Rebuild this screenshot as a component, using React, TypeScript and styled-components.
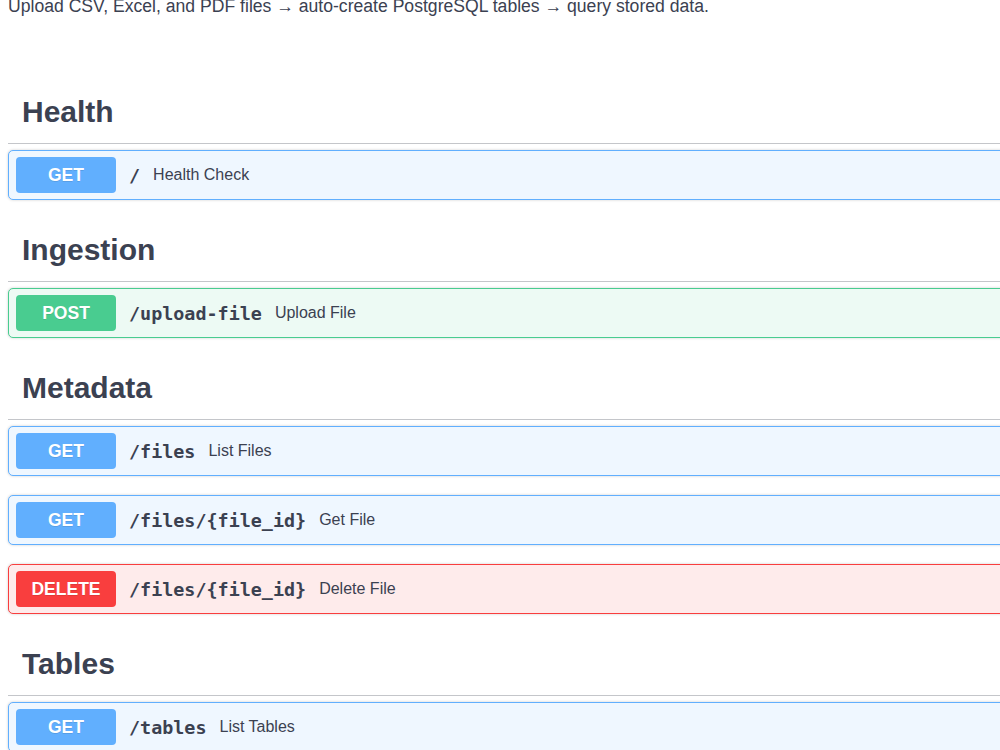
import React from "react";
import styled, { createGlobalStyle } from "styled-components";

type Method = "get" | "post" | "delete";

// endpoint groups, in the order the docs list them
const sections: {
  tag: string;
  ops: { method: Method; path: string; summary: string }[];
}[] = [
  { tag: "Health", ops: [{ method: "get", path: "/", summary: "Health Check" }] },
  {
    tag: "Ingestion",
    ops: [{ method: "post", path: "/upload-file", summary: "Upload File" }],
  },
  {
    tag: "Metadata",
    ops: [
      { method: "get", path: "/files", summary: "List Files" },
      { method: "get", path: "/files/{file_id}", summary: "Get File" },
      { method: "delete", path: "/files/{file_id}", summary: "Delete File" },
    ],
  },
  { tag: "Tables", ops: [{ method: "get", path: "/tables", summary: "List Tables" }] },
];

const palette: Record<Method, { main: string; bg: string }> = {
  get: { main: "#61affe", bg: "#eff7ff" },
  post: { main: "#49cc90", bg: "#edfaf4" },
  delete: { main: "#f93e3e", bg: "#feebeb" },
};

const GlobalStyle = createGlobalStyle`
  html, body {
    margin: 0;
    padding: 0;
    background: #ffffff;
    overflow: hidden;
  }
  body {
    font-family: "Liberation Sans", Arial, sans-serif;
    color: #3b4151;
  }
`;

export default function App() {
  return (
    <>
      <GlobalStyle />
      <Page>
        <Description>
          Upload CSV, Excel, and PDF files → auto-create PostgreSQL tables → query stored data.
        </Description>
        {sections.map((section) => (
          <Section key={section.tag}>
            <TagHeader>{section.tag}</TagHeader>
            <OpList>
              {section.ops.map((op, i) => (
                <OpBlock key={i} $method={op.method}>
                  <MethodBadge $method={op.method}>{op.method.toUpperCase()}</MethodBadge>
                  <OpPath>{op.path}</OpPath>
                  <OpSummary>{op.summary}</OpSummary>
                </OpBlock>
              ))}
            </OpList>
          </Section>
        ))}
      </Page>
    </>
  );
}

const Page = styled.div`
  width: 1200px;
  padding: 0 0 40px 8px;
  display: flex;
  flex-direction: column;
`;

const Description = styled.p`
  margin: -5px 0 64px;
  font-size: 17.6px;
  line-height: 22px;
  color: #3b4151;
`;

const Section = styled.section`
  display: flex;
  flex-direction: column;
`;

const TagHeader = styled.h3`
  margin: 0;
  height: 62px;
  display: flex;
  align-items: center;
  padding: 0 20px 0 14px;
  font-size: 30px;
  font-weight: 700;
  color: #3b4151;
  border-bottom: 1px solid rgba(59, 65, 81, 0.3);
`;

const OpList = styled.div`
  display: flex;
  flex-direction: column;
  gap: 19px;
  padding: 6px 0 19px;
`;

const OpBlock = styled.div<{ $method: Method }>`
  display: flex;
  align-items: center;
  height: 50px;
  box-sizing: border-box;
  padding: 0 7px;
  border: 1px solid ${(p) => palette[p.$method].main};
  background: ${(p) => palette[p.$method].bg};
  border-radius: 5px;
  box-shadow: 0 0 3px rgba(0, 0, 0, 0.19);
`;

const MethodBadge = styled.span<{ $method: Method }>`
  width: 100px;
  height: 36px;
  flex-shrink: 0;
  display: flex;
  align-items: center;
  justify-content: center;
  border-radius: 4px;
  background: ${(p) => palette[p.$method].main};
  color: #ffffff;
  font-size: 17.5px;
  font-weight: 700;
  text-shadow: 0 1px 0 rgba(0, 0, 0, 0.1);
`;

const OpPath = styled.span`
  padding: 0 13px;
  font-family: "DejaVu Sans Mono", monospace;
  font-size: 18.4px;
  font-weight: 700;
  color: #3b4151;
`;

const OpSummary = styled.span`
  font-size: 16px;
  color: #3b4151;
`;
